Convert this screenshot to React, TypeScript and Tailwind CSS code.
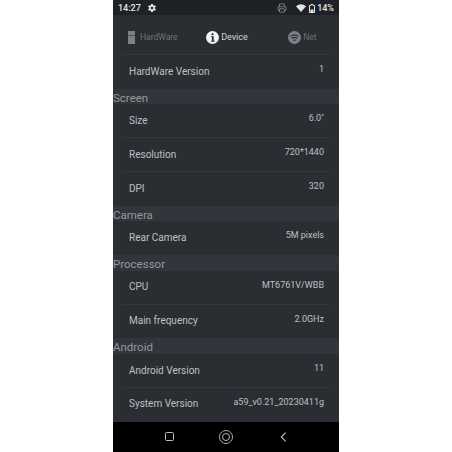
import { ReactNode } from 'react';
import { Printer } from 'lucide-react';

function Row({ label, value, divider = true }: { label: string; value: string; divider?: boolean }) {
  return (
    <div
      className={`mx-[8px] flex h-[33.8px] shrink-0 justify-between pl-[8px] pr-[7px] text-[#bfc0c2] ${
        divider ? 'border-b border-[#33363b]' : ''
      }`}
    >
      <span className="mt-[9.6px] text-[10px] leading-[14px]">{label}</span>
      <span className="mt-[8px] text-[9px] leading-[12px]">{value}</span>
    </div>
  );
}

function Section({ title }: { title: string }) {
  return <div className="h-[15.6px] shrink-0 bg-[#32353b] text-[11.5px] leading-[18px] text-[#96989c]">{title}</div>;
}

function Tab({ label, active, icon, className }: { label: string; active?: boolean; icon: ReactNode; className?: string }) {
  return (
    <div className={`flex items-center ${active ? 'text-[9px] text-[#d4d5d7]' : 'text-[8.5px] text-[#6f7276]'} ${className ?? ''}`}>
      {icon}
      <span className={active ? 'pt-[1px]' : ''}>{label}</span>
    </div>
  );
}

export default function App() {
  return (
    <div className="flex h-[452px] w-[452px] justify-center bg-white font-['Roboto',sans-serif]">
      <div className="flex w-[226px] flex-col bg-[#2a2d32]">
        {/* status bar */}
        <div className="flex h-[15px] shrink-0 items-center justify-between bg-[#1e2125] pl-[5px] pr-[5px] text-[9px] font-medium text-[#e4e5e6]">
          <div className="flex items-center gap-[7px]">
            <span className="pt-[2px]">14:27</span>
            <svg width="8" height="8" viewBox="0 0 16 16" className="mt-[1px]">
              <g fill="#e4e5e6">
                <rect x="6" y="0" width="4" height="16" />
                <rect x="6" y="0" width="4" height="16" transform="rotate(60 8 8)" />
                <rect x="6" y="0" width="4" height="16" transform="rotate(120 8 8)" />
                <circle cx="8" cy="8" r="6" />
              </g>
              <circle cx="8" cy="8" r="2.6" fill="#1e2125" />
            </svg>
          </div>
          <div className="flex items-center pt-[1px]">
            <Printer size={10} className="mr-[9px] text-[#a8a9ab]" strokeWidth={1.5} />
            <svg width="10" height="8" viewBox="0 0 10 8" className="mr-[3px]">
              <path d="M0 2.2 Q5 -1.5 10 2.2 L5 8 Z" fill="#e4e5e6" />
            </svg>
            <svg width="6" height="9" viewBox="0 0 6 9" className="mr-[2px]">
              <path d="M2 .5h2v1h1.5v7h-5v-7h1.5z" fill="none" stroke="#e4e5e6" strokeWidth="1" />
              <rect x="1.5" y="5.5" width="3" height="2.5" fill="#e4e5e6" />
            </svg>
            <span className="pt-[1px]">14%</span>
          </div>
        </div>

        {/* tabs */}
        <div className="mx-[8px] flex h-[40px] shrink-0 items-center border-b border-[#33363b] pl-[7px] pt-[5px]">
          <Tab
            label="HardWare"
            icon={
              <svg width="7" height="13" viewBox="0 0 7 13" className="mr-[5px]">
                <rect x="0" y="0" width="7" height="4" fill="#7d8084" />
                <rect x="0" y="4.6" width="7" height="8.4" fill="#7d8084" />
              </svg>
            }
          />
          <Tab
            label="Device"
            active
            className="ml-[28px]"
            icon={
              <svg width="13" height="13" viewBox="0 0 14 14" className="mr-[2.5px]">
                <circle cx="7" cy="7" r="7" fill="#f2f2f2" />
                <path d="M5.4 5.6h2.9v5h1v1h-3.9v-1h1v-4h-1z" fill="#2a2d32" />
                <circle cx="7" cy="3.5" r="1.2" fill="#2a2d32" />
              </svg>
            }
          />
          <Tab
            label="Net"
            className="ml-[40px]"
            icon={
              <svg width="13" height="13" viewBox="0 0 14 14" className="mr-[2.5px]">
                <circle cx="7" cy="7" r="7" fill="#7d8084" />
                <path d="M2.5 6 Q7 2.5 11.5 6 M4 8 Q7 5.8 10 8" fill="none" stroke="#2a2d32" strokeWidth="1.2" />
                <circle cx="7" cy="10" r="1.1" fill="#2a2d32" />
              </svg>
            }
          />
        </div>

        <Row label="HardWare Version" value="1" divider={false} />
        <Section title="Screen" />
        <Row label="Size" value='6.0"' />
        <Row label="Resolution" value="720*1440" />
        <Row label="DPI" value="320" divider={false} />
        <Section title="Camera" />
        <Row label="Rear Camera" value="5M pixels" divider={false} />
        <Section title="Processor" />
        <Row label="CPU" value="MT6761V/WBB" />
        <Row label="Main frequency" value="2.0GHz" divider={false} />
        <Section title="Android" />
        <Row label="Android Version" value="11" />
        <Row label="System Version" value="a59_v0.21_20230411g" divider={false} />

        {/* nav bar */}
        <div className="flex flex-1 items-center bg-black pl-[52px]">
          <div className="h-[9px] w-[9px] rounded-[1.5px] border-[1.2px] border-[#bdbdbd]" />
          <div className="ml-[45px] flex h-[14px] w-[14px] items-center justify-center rounded-full border border-[#adadad]">
            <div className="h-[8px] w-[8px] rounded-full border-[1.2px] border-[#bdbdbd]" />
          </div>
          <svg width="7" height="10" viewBox="0 0 7 10" className="ml-[47px]">
            <path d="M5.7 .7 1.3 5l4.4 4.3" fill="none" stroke="#bdbdbd" strokeWidth="1.1" />
          </svg>
        </div>
      </div>
    </div>
  );
}
